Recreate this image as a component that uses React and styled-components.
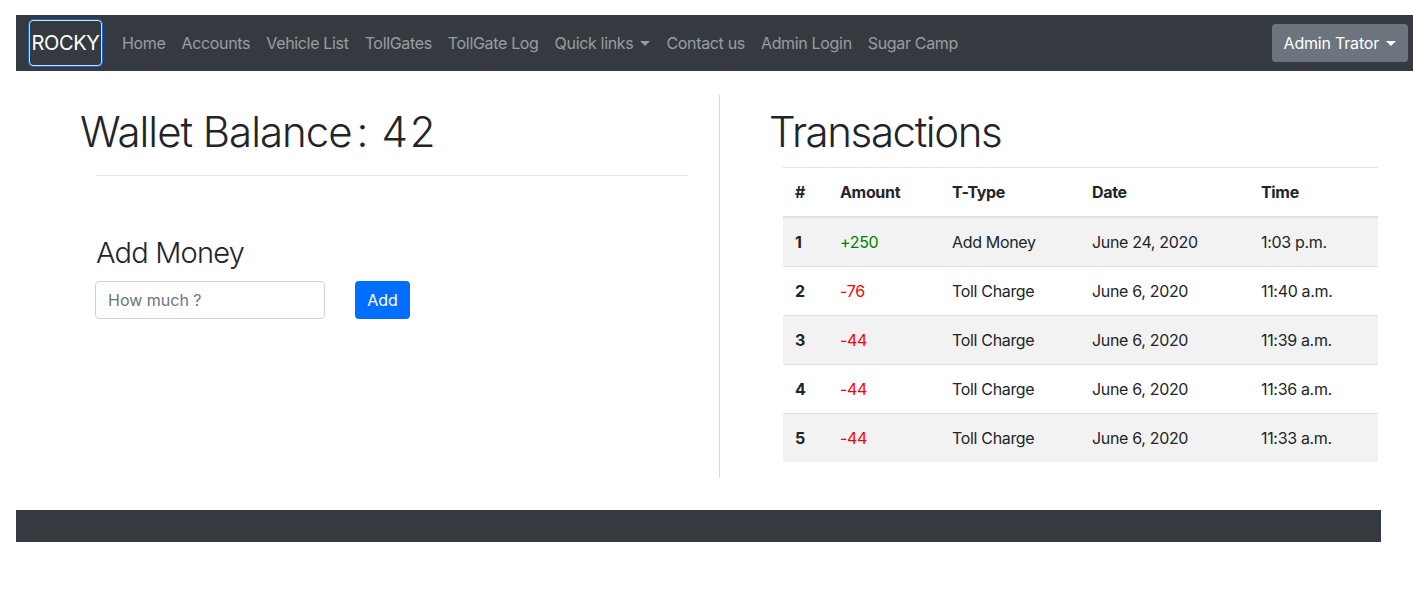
import React from "react";
import styled, { createGlobalStyle } from "styled-components";

const GlobalStyle = createGlobalStyle`
  body {
    margin: 0;
    background: #fff;
    font-family: Inter, "Noto Sans", "Liberation Sans", sans-serif;
    font-size: 16px;
    letter-spacing: -0.33px;
    color: #212529;
  }
  * { box-sizing: border-box; }
`;

const Page = styled.div`
  padding: 15px 0 70px 16px;
`;

// navbar
const Navbar = styled.nav`
  height: 56px;
  background: #343a40;
  display: flex;
  align-items: center;
  padding: 0 5px 0 13px;
`;
const Brand = styled.a`
  display: flex;
  align-items: center;
  justify-content: center;
  width: 73px;
  height: 46px;
  color: #fff;
  font-size: 20px;
  border: 1px solid #cfe0ff;
  border-radius: 4px;
  box-shadow: 0 0 0 1px #0b63e5;
  margin-right: 12px;
  letter-spacing: -0.4px;
`;
const NavList = styled.ul`
  display: flex;
  list-style: none;
  margin: 0;
  padding: 0;
  flex: 1;
`;
const NavItem = styled.li`
  padding: 8px 8px;
  color: rgba(255, 255, 255, 0.5);
  display: flex;
  align-items: center;
  white-space: nowrap;
`;
const Caret = styled.span`
  display: inline-block;
  margin-left: 7px;
  border-top: 5px solid ${p => p.light ? "#fff" : "rgba(255,255,255,.5)"};
  border-left: 5px solid transparent;
  border-right: 5px solid transparent;
`;
const UserButton = styled.button`
  height: 38px;
  padding: 0 12px;
  background: #6c757d;
  color: #fff;
  border: none;
  border-radius: 4px;
  font: inherit;
  font-size: 16px;
  letter-spacing: -0.2px;
  display: flex;
  align-items: center;
`;

// main content
const Main = styled.div`
  display: flex;
  padding-top: 24px;
`;
const LeftCol = styled.div`
  width: 704px;
  height: 383px;
  border-right: 1px solid #d9d9d9;
`;
const RightCol = styled.div`
  padding-left: 49px;
`;
const Heading = styled.h1`
  margin: 10px 0 0 ${p => p.indent || 0}px;
  font-size: 42px;
  font-weight: 300;
  line-height: 53px;
  letter-spacing: ${p => p.tight ? -1.4 : -1}px;
`;
const Colon = styled.span`
  margin: 0 14px 0 5px;
`;
const Balance = styled.span`
  letter-spacing: 2px;
`;
const Rule = styled.hr`
  margin: 17px 0 0 80px;
  width: 592px;
  border: 0;
  border-top: 1px solid #e3e3e3;
`;
const SubHeading = styled.h2`
  margin: 59px 0 0 80px;
  font-size: 29px;
  font-weight: 300;
  line-height: 36px;
  letter-spacing: -0.8px;
`;
const Form = styled.div`
  display: flex;
  gap: 30px;
  margin: 10px 0 0 79px;
`;
const Input = styled.input`
  width: 230px;
  height: 38px;
  padding: 0 12px;
  border: 1px solid #ced4da;
  border-radius: 4px;
  font: inherit;
  font-size: 16px;
  &::placeholder { color: #6c757d; }
`;
const AddButton = styled.button`
  width: 55px;
  height: 38px;
  background: #006eff;
  color: #fff;
  border: none;
  border-radius: 4px;
  font: inherit;
  font-size: 16px;
`;

const Table = styled.table`
  margin: 9px 0 0 14px;
  width: 595px;
  border-collapse: collapse;
  border-top: 1px solid #dee2e6;
  table-layout: fixed;
`;
const Th = styled.th`
  text-align: left;
  font-weight: 700;
  padding: 12px;
  line-height: 24px;
  border-bottom: 2px solid #dee2e6;
  width: ${p => p.w}px;
`;
const Tr = styled.tr`
  background: ${p => (p.striped ? "#f2f2f2" : "#fff")};
  border-top: 1px solid #dee2e6;
`;
const Td = styled.td`
  padding: 12px;
  line-height: 24px;
  font-weight: ${p => (p.bold ? 700 : 400)};
  color: ${p => p.color || "#212529"};
`;

const Footer = styled.footer`
  margin-top: 32px;
  width: 1365px;
  height: 32px;
  background: #343a40;
`;

const links = [
  "Home",
  "Accounts",
  "Vehicle List",
  "TollGates",
  "TollGate Log",
  "Quick links",
  "Contact us",
  "Admin Login",
  "Sugar Camp"
];

const rows = [
  { amount: "+250", type: "Add Money", date: "June 24, 2020", time: "1:03 p.m." },
  { amount: "-76", type: "Toll Charge", date: "June 6, 2020", time: "11:40 a.m." },
  { amount: "-44", type: "Toll Charge", date: "June 6, 2020", time: "11:39 a.m." },
  { amount: "-44", type: "Toll Charge", date: "June 6, 2020", time: "11:36 a.m." },
  { amount: "-44", type: "Toll Charge", date: "June 6, 2020", time: "11:33 a.m." }
];

export default function App() {
  return (
    <Page>
      <GlobalStyle />
      <Navbar>
        <Brand>ROCKY</Brand>
        <NavList>
          {links.map(l => (
            <NavItem key={l}>
              {l}
              {l === "Quick links" && <Caret />}
            </NavItem>
          ))}
        </NavList>
        <UserButton>
          Admin Trator
          <Caret light />
        </UserButton>
      </Navbar>
      <Main>
        <LeftCol>
          <Heading indent={64}>
            Wallet Balance<Colon>:</Colon>
            <Balance>42</Balance>
          </Heading>
          <Rule />
          <SubHeading>Add Money</SubHeading>
          <Form>
            <Input placeholder="How much ?" />
            <AddButton>Add</AddButton>
          </Form>
        </LeftCol>
        <RightCol>
          <Heading tight>Transactions</Heading>
          <Table>
            <thead>
              <tr>
                <Th w={45}>#</Th>
                <Th w={112}>Amount</Th>
                <Th w={140}>T-Type</Th>
                <Th w={169}>Date</Th>
                <Th w={129}>Time</Th>
              </tr>
            </thead>
            <tbody>
              {rows.map((r, i) => (
                <Tr key={i} striped={i % 2 === 0}>
                  <Td bold>{i + 1}</Td>
                  <Td color={r.amount.startsWith("+") ? "#008000" : "#ff0000"}>
                    {r.amount}
                  </Td>
                  <Td>{r.type}</Td>
                  <Td>{r.date}</Td>
                  <Td>{r.time}</Td>
                </Tr>
              ))}
            </tbody>
          </Table>
        </RightCol>
      </Main>
      <Footer />
    </Page>
  );
}
